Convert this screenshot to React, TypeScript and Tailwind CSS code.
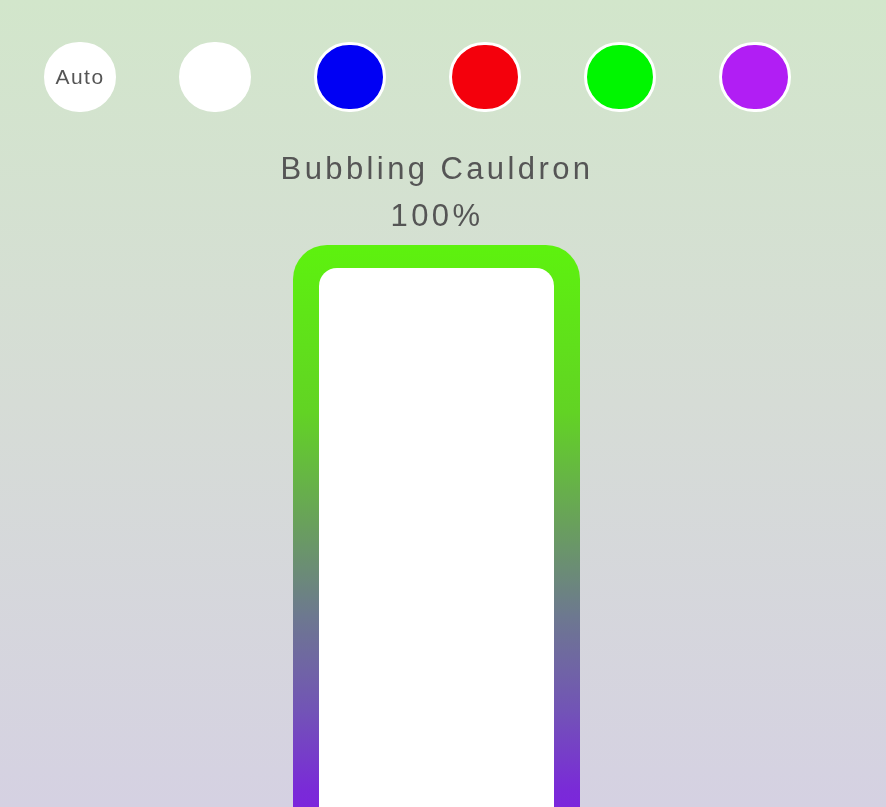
import React from 'react';

const swatches = [
    { key: 'auto', bg: 'bg-white', label: 'Auto' },
    { key: 'white', bg: 'bg-white', label: '' },
    { key: 'blue', bg: 'bg-[#0000f4]', label: '' },
    { key: 'red', bg: 'bg-[#f4000c]', label: '' },
    { key: 'green', bg: 'bg-[#00f600]', label: '' },
    { key: 'purple', bg: 'bg-[#b11ef4]', label: '' },
];

const App: React.FC = () => {
    return (
        <div
            className="h-[807px] w-full overflow-hidden bg-gradient-to-b from-[#d2e6cb] via-[#d6dcd6] to-[#d5d1e2]"
            style={{ fontFamily: '"Liberation Sans", Arial, sans-serif' }}
        >
            <div className="flex flex-col blur-[0.6px]">
                {/* colour picker row */}
                <div className="flex items-center gap-[63px] pl-[44px] pt-[42px]">
                    {swatches.map((s) => (
                        <div
                            key={s.key}
                            className={`w-[72px] h-[70px] rounded-full border-[3px] border-white flex items-center justify-center ${s.bg}`}
                        >
                            {s.label && <span className="text-[21px] tracking-[1.5px] text-[#555]">{s.label}</span>}
                        </div>
                    ))}
                </div>

                <div className="flex flex-col items-center mt-[33px] pr-[12px]">
                    <div className="text-[31px] leading-[47px] tracking-[3.4px] text-[#555]">Bubbling Cauldron</div>
                    <div className="text-[31px] leading-[47px] tracking-[3.4px] text-[#555]">100%</div>
                </div>

                {/* level bar */}
                <div className="flex justify-center pr-[13px] mt-[6px]">
                    <div className="w-[287px] h-[620px] rounded-[34px] p-[26px] pt-[23px] bg-[linear-gradient(to_bottom,#5df20e_0%,#62d324_27%,#69a05c_45%,#6d7890_60%,#7254b6_75%,#7a2ad8_88%,#8218ea_100%)]">
                        <div className="h-full w-full rounded-[18px] bg-white" />
                    </div>
                </div>
            </div>
        </div>
    );
};

export default App;
